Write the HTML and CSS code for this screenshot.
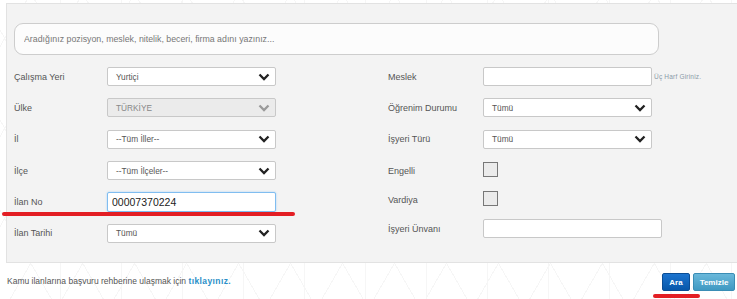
FILE: index.html
```html
<!DOCTYPE html>
<html lang="tr">
<head>
  <meta charset="UTF-8">
  <meta name="viewport" content="width=device-width, initial-scale=1.0">
  <title>İlan Arama</title>
  <link rel="stylesheet" href="styles.css">
</head>
<body>
  <div class="page">
    <div class="panel">
      <input type="text" class="search" placeholder="Aradığınız pozisyon, meslek, nitelik, beceri, firma adını yazınız...">
      <div class="form">
        <div class="col col-left">
          <div class="row">
            <label>Çalışma Yeri</label>
            <div class="select"><span>Yurtiçi</span><svg viewBox="0 0 12 8"><path d="M1.5 1.5 6 6l4.5-4.5"/></svg></div>
          </div>
          <div class="row">
            <label>Ülke</label>
            <div class="select disabled"><span>TÜRKİYE</span><svg viewBox="0 0 12 8"><path d="M1.5 1.5 6 6l4.5-4.5"/></svg></div>
          </div>
          <div class="row">
            <label>İl</label>
            <div class="select"><span>--Tüm İller--</span><svg viewBox="0 0 12 8"><path d="M1.5 1.5 6 6l4.5-4.5"/></svg></div>
          </div>
          <div class="row">
            <label>İlçe</label>
            <div class="select"><span>--Tüm İlçeler--</span><svg viewBox="0 0 12 8"><path d="M1.5 1.5 6 6l4.5-4.5"/></svg></div>
          </div>
          <div class="row">
            <label>İlan No</label>
            <input type="text" class="field focus" value="00007370224">
          </div>
          <div class="row">
            <label>İlan Tarihi</label>
            <div class="select"><span>Tümü</span><svg viewBox="0 0 12 8"><path d="M1.5 1.5 6 6l4.5-4.5"/></svg></div>
          </div>
        </div>
        <div class="col col-right">
          <div class="row">
            <label>Meslek</label>
            <input type="text" class="field">
            <span class="hint">Üç Harf Giriniz.</span>
          </div>
          <div class="row">
            <label>Öğrenim Durumu</label>
            <div class="select"><span>Tümü</span><svg viewBox="0 0 12 8"><path d="M1.5 1.5 6 6l4.5-4.5"/></svg></div>
          </div>
          <div class="row">
            <label>İşyeri Türü</label>
            <div class="select"><span>Tümü</span><svg viewBox="0 0 12 8"><path d="M1.5 1.5 6 6l4.5-4.5"/></svg></div>
          </div>
          <div class="row row-check">
            <label>Engelli</label>
            <span class="check"></span>
          </div>
          <div class="row row-check">
            <label>Vardiya</label>
            <span class="check"></span>
          </div>
          <div class="row">
            <label>İşyeri Ünvanı</label>
            <input type="text" class="field wide">
          </div>
        </div>
      </div>
    </div>

    <div class="footer">
      <p>Kamu ilanlarına başvuru rehberine ulaşmak için <a href="#">tıklayınız.</a></p>
      <div class="actions">
        <button class="btn btn-search">Ara</button>
        <button class="btn btn-clear">Temizle</button>
      </div>
    </div>

    <span class="mark mark-no"></span>
    <span class="mark mark-ara"></span>
  </div>
</body>
</html>
```

FILE: styles.css
```css
body {
  margin: 0;
  font-family: "Liberation Sans", Arial, sans-serif;
  color: #555;
  background-color: #fff;
  background-image:
    repeating-linear-gradient(60deg, transparent 0 44px, #f6f6f6 44px 45px),
    repeating-linear-gradient(-60deg, transparent 0 44px, #f6f6f6 44px 45px),
    repeating-linear-gradient(90deg, transparent 0 60px, #f6f6f6 60px 61px);
  overflow: hidden;
}
.page {
  position: relative;
  width: 737px;
  height: 299px;
  padding: 3px 0 0 6px;
  box-sizing: border-box;
}
.panel {
  background: #f3f3f3;
  border: 1px solid #e2e2e2;
  border-right: none;
  padding: 19px 0 13px 7px;
  height: 226px;
}
.search {
  display: block;
  box-sizing: border-box;
  width: 645px;
  height: 32px;
  border: 1px solid #cdcdcd;
  border-radius: 9px;
  background: #fcfcfc;
  padding: 0 9px;
  font-family: inherit;
  font-size: 8.8px;
  outline: none;
}
.search::placeholder {
  color: #777;
}
.form {
  display: flex;
  margin-top: 6px;
}
.col-left {
  width: 374px;
}
.row {
  display: flex;
  align-items: center;
  height: 31.3px;
}
.row label {
  font-size: 9px;
  color: #555;
}
.col-left label {
  width: 93px;
}
.col-right label {
  width: 95px;
}
.select,
.field {
  box-sizing: border-box;
  width: 169px;
  height: 19px;
  background: #fff;
  border: 1px solid #c8c8c8;
  border-radius: 2px;
}
.select {
  display: flex;
  align-items: center;
  justify-content: space-between;
  padding: 0 5px 0 8px;
  font-size: 8.3px;
  color: #555;
}
.select svg {
  width: 12px;
  height: 8px;
  fill: none;
  stroke: #222;
  stroke-width: 2.3;
}
.select.disabled {
  background: #ebebeb;
  color: #888;
}
.select.disabled svg {
  stroke: #999;
}
.field {
  font-family: inherit;
  padding: 0 4px;
  outline: none;
}
.field.focus {
  height: 20px;
  border-color: #80bdf0;
  box-shadow: 0 0 2px #9fcff5;
  font-size: 10.5px;
  color: #222;
}
.field.wide {
  width: 179px;
}
.hint {
  margin-left: 2px;
  font-size: 6.5px;
  color: #8a9aa8;
  letter-spacing: 0.2px;
}
.check {
  box-sizing: border-box;
  width: 15px;
  height: 15px;
  background: #ebebeb;
  border: 1px solid #777;
}
.row-check {
  height: 29px;
}
.row-check label {
  padding-top: 4px;
}
.footer {
  display: flex;
  justify-content: space-between;
  align-items: center;
  height: 32px;
  padding: 0 2px 0 1px;
}
.footer p {
  margin: 3px 0 0;
  font-size: 8.5px;
  color: #555;
}
.footer a {
  color: #2a8fc8;
  font-weight: bold;
  text-decoration: none;
  letter-spacing: 0.4px;
}
.actions {
  display: flex;
  gap: 3px;
  margin-top: 6px;
}
.btn {
  height: 18px;
  border: 1px solid;
  border-radius: 2px;
  font-family: inherit;
  font-size: 8px;
  font-weight: bold;
  color: #fff;
  padding: 0;
}
.btn-search {
  width: 28px;
  background: linear-gradient(#1c74cf, #0757aa);
  border-color: #0a4d95;
}
.btn-clear {
  width: 42px;
  background: linear-gradient(#6ab8da, #3f99c2);
  border-color: #3a8db5;
}
.mark {
  position: absolute;
  height: 4px;
  border-radius: 2px;
  background: #e31e24;
}
.mark-no {
  left: 2px;
  top: 212px;
  width: 293px;
}
.mark-ara {
  left: 653px;
  top: 294px;
  width: 47px;
}
```
